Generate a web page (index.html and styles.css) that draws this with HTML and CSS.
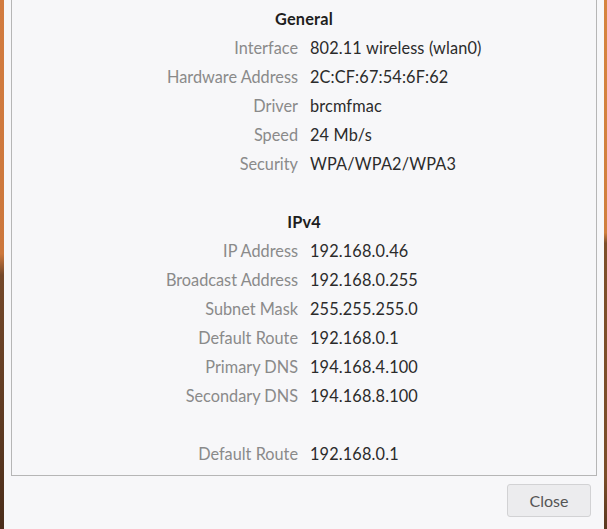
FILE: index.html
```html
<!DOCTYPE html>
<html>
<head>
<meta charset="utf-8">
<link rel="stylesheet" href="styles.css">
</head>
<body>
<div class="screen">
  <div class="edge edge-left"></div>
  <div class="dialog">
    <div class="panel">
      <div class="grid">
        <div class="heading">General</div>
        <div class="label">Interface</div><div class="value">802.11 wireless (wlan0)</div>
        <div class="label">Hardware Address</div><div class="value">2C:CF:67:54:6F:62</div>
        <div class="label">Driver</div><div class="value">brcmfmac</div>
        <div class="label">Speed</div><div class="value">24 Mb/s</div>
        <div class="label">Security</div><div class="value">WPA/WPA2/WPA3</div>
        <div class="spacer"></div>
        <div class="heading">IPv4</div>
        <div class="label">IP Address</div><div class="value">192.168.0.46</div>
        <div class="label">Broadcast Address</div><div class="value">192.168.0.255</div>
        <div class="label">Subnet Mask</div><div class="value">255.255.255.0</div>
        <div class="label">Default Route</div><div class="value">192.168.0.1</div>
        <div class="label">Primary DNS</div><div class="value">194.168.4.100</div>
        <div class="label">Secondary DNS</div><div class="value">194.168.8.100</div>
        <div class="spacer"></div>
        <div class="label">Default Route</div><div class="value">192.168.0.1</div>
      </div>
    </div>
    <div class="footer">
      <button class="btn">Close</button>
    </div>
  </div>
  <div class="edge edge-right"></div>
</div>
</body>
</html>
```
FILE: styles.css
```css
html, body {
  margin: 0;
  padding: 0;
  height: 100%;
}
body {
  font-family: "Lato", "Open Sans", sans-serif;
  font-size: 16.3px;
  overflow: hidden;
}
.screen {
  display: flex;
  height: 529px;
}
.edge {
  flex: none;
}
.edge-left {
  width: 4px;
  background: linear-gradient(to bottom, #d27b3f 0%, #cc773c 48%, #74482a 52%, #5e3a22 80%, #4a2d1a 100%);
}
.edge-right {
  width: 3px;
  background: linear-gradient(to bottom, #d6843f 0%, #d07f3e 44%, #7d4f2a 46%, #7a4d29 90%, #5a3820 100%);
}
.dialog {
  flex: 1;
  background: #f7f7f9;
  display: flex;
  flex-direction: column;
  padding: 0 7px;
}
.panel {
  border: 1px solid #b6b6b6;
  border-top: none;
  height: 476px;
  box-sizing: border-box;
  padding-top: 4px;
}
.grid {
  display: grid;
  grid-template-columns: 1fr 1fr;
  column-gap: 12px;
  grid-auto-rows: 29px;
  align-items: center;
}
.heading {
  grid-column: 1 / 3;
  text-align: center;
  font-weight: 700;
  color: #1e1e1e;
  letter-spacing: 0.2px;
}
.spacer {
  grid-column: 1 / 3;
}
.label {
  text-align: right;
  color: #8a8a8a;
}
.value {
  color: #2b2b2b;
  letter-spacing: 0.15px;
}
.footer {
  display: flex;
  justify-content: flex-end;
  padding: 8px 6px 0 0;
}
.btn {
  width: 84px;
  height: 33px;
  font-family: inherit;
  font-size: 16px;
  color: #555555;
  background: #ececee;
  border: 1px solid #d2d2d4;
  border-radius: 3px;
}
```
